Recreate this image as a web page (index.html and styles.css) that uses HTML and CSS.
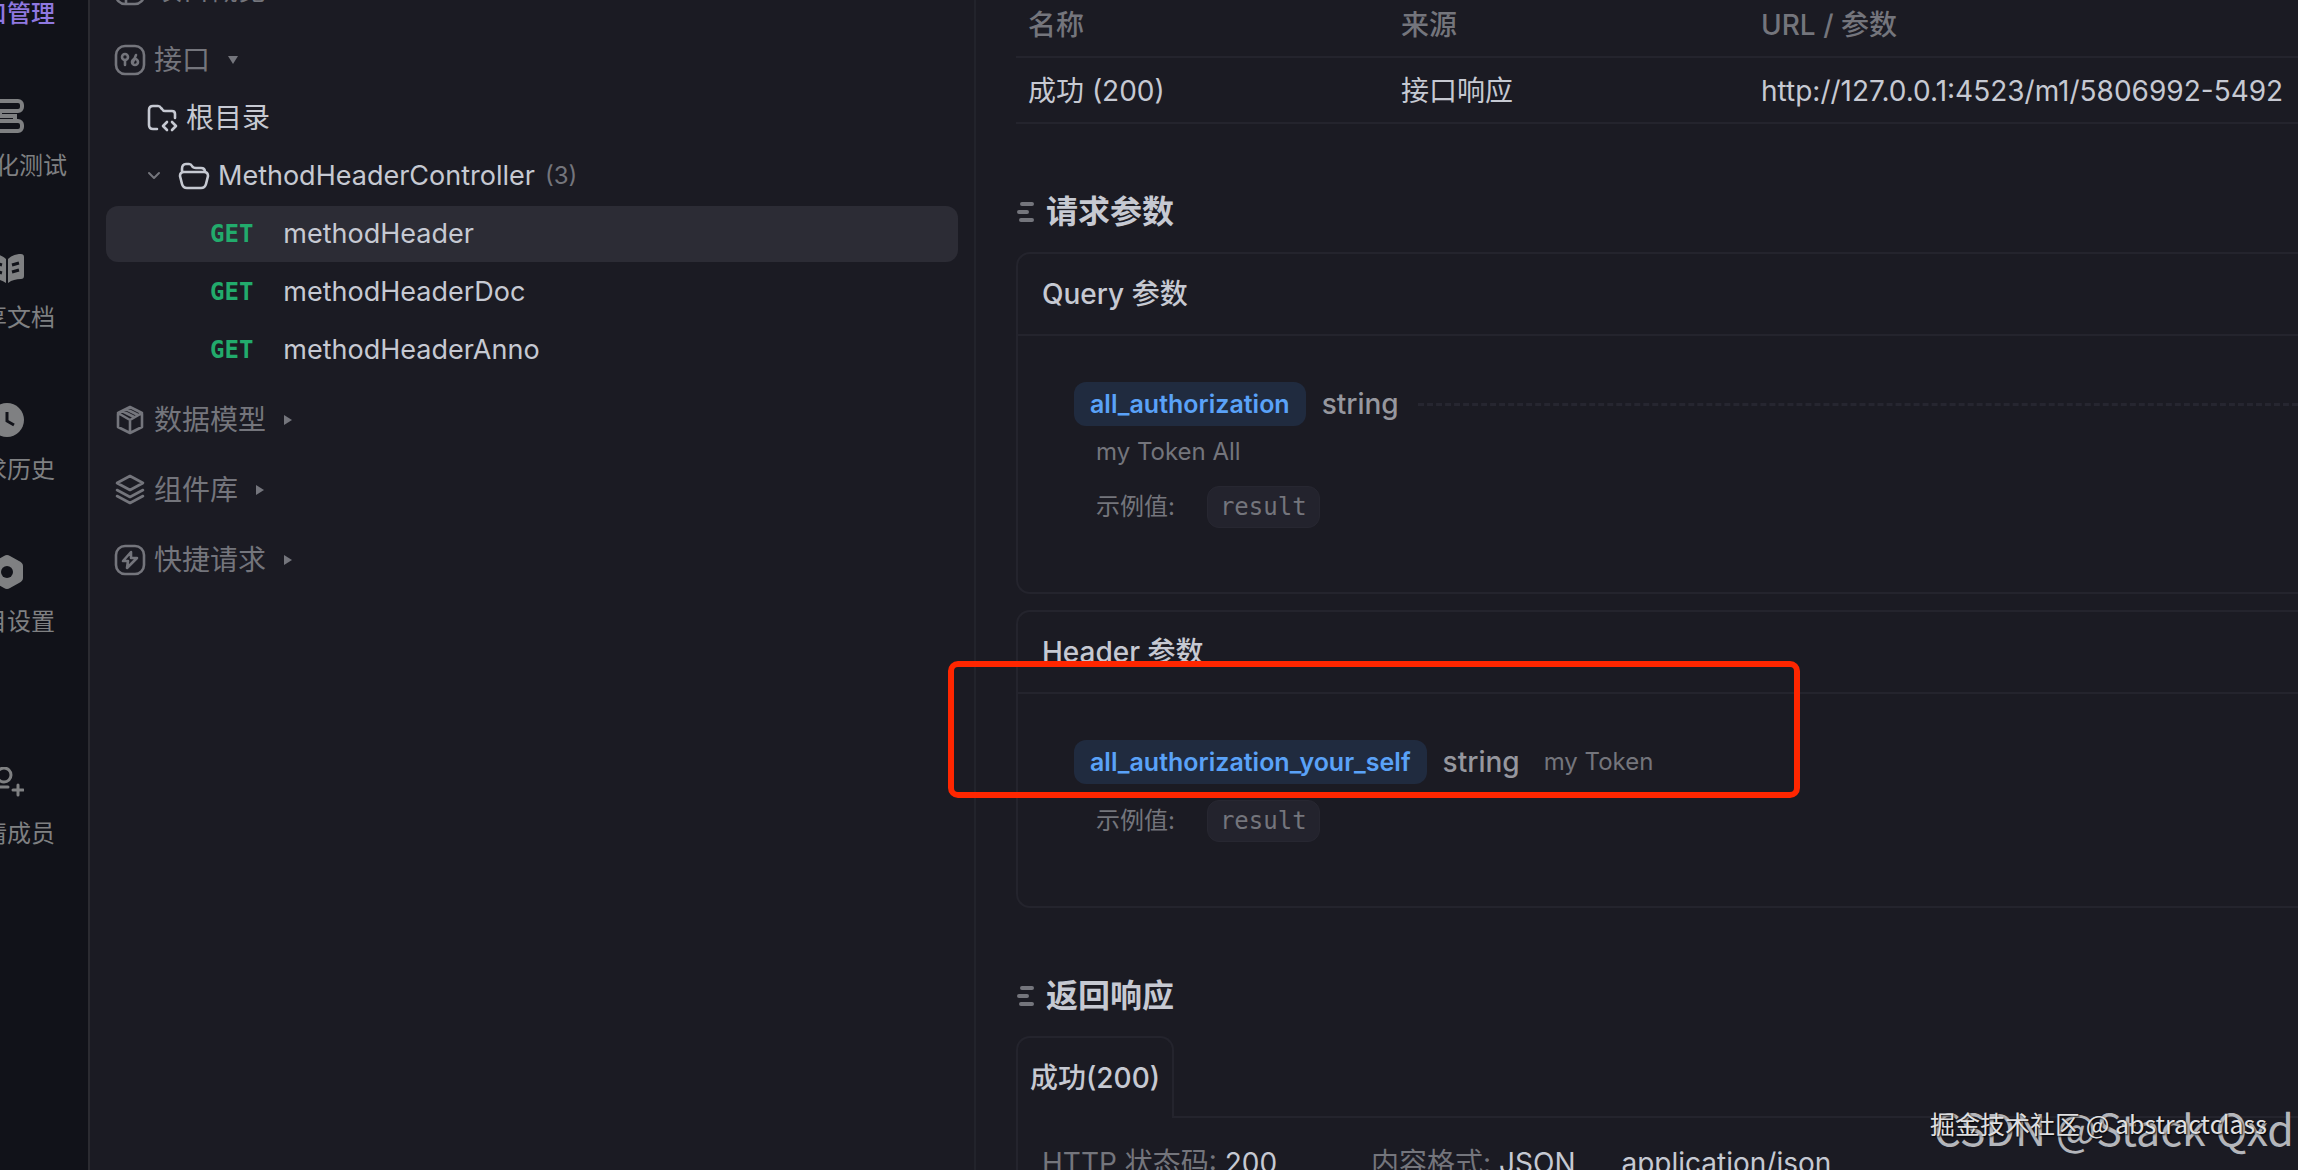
FILE: index.html
```html
<!DOCTYPE html>
<html lang="zh-CN">
<head>
  <meta charset="UTF-8">
  <meta name="viewport" content="width=device-width, initial-scale=1.0">
  <title>methodHeader</title>
  <link rel="stylesheet" href="styles.css">
</head>
<body>
  <div class="app">
    <nav class="rail">
      <a class="rail-item active" href="#">
        <svg viewBox="0 0 34 34"><rect x="3" y="3" width="28" height="28" rx="8"/></svg>
        <span>接口管理</span>
      </a>
      <a class="rail-item" href="#">
        <svg viewBox="0 0 34 34"><g fill="none" stroke="currentColor" stroke-width="4"><rect x="2" y="2" width="30" height="10" rx="4"/><path d="M10 12v5h15v5H10"/><rect x="2" y="22" width="30" height="10" rx="4"/></g></svg>
        <span>自动化测试</span>
      </a>
      <a class="rail-item" href="#">
        <svg viewBox="0 0 34 34"><path d="M16 8C12 4 7 3 3 3Q0 3 0 6v19q0 3 3 3c5 0 9 1 13 4zM18 8c4-4 9-5 13-5q3 0 3 3v19q0 3-3 3c-5 0-9 1-13 4z"/><path class="cut" d="M5 12l7 2M5 20l7 2M22 14l7-2M22 21l7-2"/></svg>
        <span>共享文档</span>
      </a>
      <a class="rail-item" href="#">
        <svg viewBox="0 0 34 34"><circle cx="17" cy="17" r="17"/><path class="cut" d="M17 9v9l7 4"/></svg>
        <span>请求历史</span>
      </a>
      <a class="rail-item" href="#">
        <svg viewBox="0 0 34 34"><path d="M14 1q3-2 6 0l9 5q4 2 4 5v12q0 3-4 5l-9 5q-3 2-6 0l-9-5q-4-2-4-5V11q0-3 4-5z"/><circle class="hole" cx="17" cy="17" r="6"/></svg>
        <span>项目设置</span>
      </a>
      <a class="rail-item invite" href="#">
        <svg viewBox="0 0 34 34"><g fill="none" stroke="currentColor" stroke-width="3" stroke-linecap="round"><circle cx="14" cy="8" r="7"/><path d="M3 20h15M28 18v10M23 23h10"/></g></svg>
        <span>邀请成员</span>
      </a>
    </nav>

    <aside class="sidebar">
      <section class="group">
        <button class="group-title">
          <svg viewBox="0 0 32 32"><rect x="2" y="2" width="28" height="28" rx="9"/><path d="M12 3v26M12 20h17"/></svg>
          <span>项目概览</span>
        </button>
      </section>
      <section class="group">
        <button class="group-title">
          <svg viewBox="0 0 32 32"><rect x="2" y="2" width="28" height="28" rx="9"/><circle cx="11" cy="13" r="3"/><path d="M11 16v5M19 18l3-7"/><circle cx="21" cy="18" r="3"/></svg>
          <span>接口</span>
          <i class="caret caret-down"></i>
        </button>
        <ul class="tree">
          <li class="row root">
            <svg viewBox="0 0 32 32"><path d="M11 27H7q-4 0-4-4V8q0-4 4-4h5q2 0 3 2l1 1q1 2 3 2h7q3 0 3 3v4M21 20l-4 4 4 4M26 20l4 4-4 4"/></svg>
            <span>根目录</span>
          </li>
          <li class="row folder">
            <svg class="chevron" viewBox="0 0 16 16"><path d="M3 5l5 5 5-5"/></svg>
            <svg viewBox="0 0 32 32"><path d="M4 12V9q0-5 4-5h3q2 0 3 2 1 2 4 2h5q4 0 4 4M6 12h20q4 0 4 4l-2 8q-1 4-5 4H9q-4 0-5-4l-2-8q0-4 4-4z"/></svg>
            <span>MethodHeaderController</span>
            <span class="count">(3)</span>
          </li>
          <li class="row api selected"><b class="method">GET</b><span>methodHeader</span></li>
          <li class="row api"><b class="method">GET</b><span>methodHeaderDoc</span></li>
          <li class="row api"><b class="method">GET</b><span>methodHeaderAnno</span></li>
        </ul>
      </section>
      <section class="group">
        <button class="group-title">
          <svg viewBox="0 0 32 32"><path d="M16 3l12 6v14l-12 6-12-6V9zM4 9l12 7 12-7M16 16v13M8 7l12 6M12 5l12 6"/></svg>
          <span>数据模型</span>
          <i class="caret"></i>
        </button>
      </section>
      <section class="group">
        <button class="group-title">
          <svg viewBox="0 0 32 32"><path d="M16 2l13 7-13 7L3 9zM3 16l13 7 13-7M3 22l13 7 13-7"/></svg>
          <span>组件库</span>
          <i class="caret"></i>
        </button>
      </section>
      <section class="group">
        <button class="group-title">
          <svg viewBox="0 0 32 32"><rect x="2" y="2" width="28" height="28" rx="9"/><path d="M17 8l-8 9h5l-1 7 10-10h-6z"/></svg>
          <span>快捷请求</span>
          <i class="caret"></i>
        </button>
      </section>
    </aside>

    <main class="main">
      <table class="examples">
        <thead><tr><th class="col-name">名称</th><th class="col-source">来源</th><th>URL / 参数</th></tr></thead>
        <tbody><tr><td>成功 (200)</td><td>接口响应</td><td>http://127.0.0.1:4523/m1/5806992-5492</td></tr></tbody>
      </table>

      <h2 class="title">
        <svg viewBox="0 0 18 20"><path d="M6 2h10M3 10h8M5 18h11"/></svg>
        请求参数
      </h2>
      <section class="card">
        <h3>Query 参数</h3>
        <div class="params">
          <div class="param"><code class="name">all_authorization</code><span class="type">string</span><i class="dashes"></i></div>
          <p class="desc">my Token All</p>
          <div class="example"><span>示例值:</span><code>result</code></div>
        </div>
      </section>
      <section class="card">
        <h3>Header 参数</h3>
        <div class="params">
          <div class="param"><code class="name">all_authorization_your_self</code><span class="type">string</span><span class="note">my Token</span></div>
          <div class="example"><span>示例值:</span><code>result</code></div>
        </div>
        <div class="highlight"></div>
      </section>

      <h2 class="title">
        <svg viewBox="0 0 18 20"><path d="M6 2h10M3 10h8M5 18h11"/></svg>
        返回响应
      </h2>
      <div class="tabs"><button class="tab">成功(200)</button><i class="tab-line"></i></div>
      <div class="response">
        <span class="pair"><span class="key">HTTP 状态码:</span> 200</span>
        <span class="pair"><span class="key">内容格式:</span> JSON</span>
        <span>application/json</span>
      </div>
    </main>
  </div>
  <div class="mark mark-large">CSDN @Stack Qxd</div>
  <div class="mark mark-small">掘金技术社区 @ abstractclass</div>
</body>
</html>
```

FILE: styles.css
```css
:root {
  --bg: #1b1b23;
  --rail: #111219;
  --line: #24242d;
  --text: #c6c9d2;
  --muted: #74757c;
  --blue: #5aa2f8;
}

* { box-sizing: border-box; }

body {
  margin: 0;
  height: 100vh;
  overflow: hidden;
  position: relative;
  background: var(--bg);
  color: var(--text);
  font-family: Inter, "Noto Sans CJK SC", sans-serif;
  font-size: 28px;
  line-height: 42px;
}

button { background: none; border: none; padding: 0; font: inherit; color: inherit; cursor: pointer; }
h2, h3, p, ul { margin: 0; padding: 0; }

.app { display: flex; height: 100vh; overflow: hidden; }

.rail {
  flex: 0 0 164px;
  margin-left: -74px;
  background: var(--rail);
  border-right: 2px solid #2b2b31;
}
.rail-item {
  display: flex;
  flex-direction: column;
  align-items: center;
  gap: 17px;
  height: 152px;
  padding-top: 33px;
  color: #7f8082;
  font-size: 24px;
  line-height: 32px;
  text-decoration: none;
  white-space: nowrap;
}
.rail-item:first-child { margin-top: -86px; }
.rail-item.active { color: #8f78e0; font-weight: 500; }
.rail-item.invite { margin-top: 60px; }
.rail-item svg { width: 34px; height: 34px; fill: currentColor; }
.rail-item .cut { fill: none; stroke: var(--rail); stroke-width: 3; }
.rail-item .hole { fill: var(--rail); }

.sidebar {
  flex: 0 0 886px;
  padding: 0 16px;
  border-right: 2px solid #22232b;
}
.group { margin-bottom: 12px; }
.group:first-child { margin-top: -39px; }
.group-title {
  display: flex;
  align-items: center;
  gap: 8px;
  width: 100%;
  height: 58px;
  padding-left: 8px;
  color: var(--muted);
}
.sidebar svg {
  flex: none;
  width: 32px;
  height: 32px;
  fill: none;
  stroke: currentColor;
  stroke-width: 2.6;
  stroke-linecap: round;
  stroke-linejoin: round;
}
.caret {
  margin-left: 10px;
  border: 5px solid transparent;
  border-left: 8px solid currentColor;
  border-right: 0;
}
.caret-down {
  border: 5px solid transparent;
  border-top: 8px solid currentColor;
  border-bottom: 0;
}

.tree { padding: 1px 0; list-style: none; }
.row {
  display: flex;
  align-items: center;
  height: 56px;
  border-radius: 12px;
}
.row + .row { margin-top: 2px; }
.root { gap: 8px; padding-left: 40px; }
.folder { gap: 8px; padding-left: 40px; font-size: 27px; }
.sidebar .chevron { width: 16px; height: 16px; margin-right: 8px; color: var(--muted); stroke-width: 2; }
.count { margin-left: 2px; color: var(--muted); font-size: 24px; }
.api { gap: 30px; padding-left: 104px; font-size: 27px; }
.selected { background: #2c2c35; }
.method {
  color: #22ab6c;
  font-family: "DejaVu Sans Mono", monospace;
  font-size: 24px;
}

.main { flex: 1; min-width: 0; padding-left: 40px; }

.examples {
  width: 100%;
  margin-top: -8px;
  border-collapse: separate;
  border-spacing: 0;
  table-layout: fixed;
  text-align: left;
  white-space: nowrap;
}
.examples th, .examples td {
  height: 66px;
  padding: 2px 12px 0;
  border-bottom: 2px solid var(--line);
}
.examples th { color: var(--muted); font-weight: 500; }
.examples td:last-child { padding-right: 0; }
.col-name { width: 373px; }
.col-source { width: 360px; }

.title {
  display: flex;
  align-items: center;
  gap: 12px;
  height: 48px;
  margin: 64px 0 16px;
  font-size: 32px;
  font-weight: 600;
}
.title svg { width: 18px; height: 20px; fill: none; stroke: var(--muted); stroke-width: 4; stroke-linecap: round; }

.card {
  position: relative;
  margin-bottom: 16px;
  border: 2px solid var(--line);
  border-right: 0;
  border-radius: 14px 0 0 14px;
}
.card h3 {
  height: 82px;
  padding-left: 24px;
  border-bottom: 2px solid var(--line);
  font-size: 28px;
  font-weight: 500;
  line-height: 80px;
}
.params { padding: 46px 0 64px 56px; }
.param { display: flex; align-items: center; gap: 16px; height: 44px; }
.name {
  padding: 0 16px;
  border-radius: 12px;
  background: #202b3f;
  color: var(--blue);
  font-family: Inter, sans-serif;
  font-size: 25px;
  font-weight: 600;
  line-height: 44px;
}
.type { color: #96979e; font-weight: 500; }
.note { margin-left: 8px; color: var(--muted); font-size: 24px; }
.dashes { flex: 1; margin-left: 3px; border-top: 3px dashed #262630; }
.desc {
  padding: 8px 0 0 22px;
  color: var(--muted);
  font-size: 24px;
  line-height: 36px;
}
.example {
  display: flex;
  align-items: center;
  gap: 32px;
  margin-top: 16px;
  padding-left: 22px;
  color: var(--muted);
  font-size: 24px;
}
.example code {
  padding: 0 12px;
  border: 1px solid #272731;
  border-radius: 12px;
  background: #23232d;
  font-family: "DejaVu Sans Mono", monospace;
  line-height: 40px;
}

/* annotation frame drawn over the header parameters */
.highlight {
  position: absolute;
  top: 49px;
  left: -70px;
  width: 852px;
  height: 137px;
  border: 6px solid #ff2600;
  border-radius: 10px;
}

.tabs { display: flex; align-items: stretch; }
.tab {
  height: 82px;
  padding: 0 12px;
  border: 2px solid var(--line);
  border-bottom: 0;
  border-radius: 14px 14px 0 0;
  font-weight: 500;
}
.tab-line { flex: 1; border-bottom: 2px solid var(--line); }
.response {
  display: flex;
  gap: 46px;
  padding: 24px 0 24px 24px;
  border-left: 2px solid var(--line);
  white-space: nowrap;
}
.pair:first-child { margin-right: 48px; }
.key { color: var(--muted); }

.mark {
  position: absolute;
  white-space: nowrap;
  font-family: "Noto Sans CJK SC", sans-serif;
}
.mark-large { right: 4px; bottom: 22px; color: #b4b6bb; font-size: 43px; }
.mark-small { right: 31px; bottom: 26px; color: #e0e0e2; font-size: 25px; text-shadow: 1px 1px 2px #000; }
```
